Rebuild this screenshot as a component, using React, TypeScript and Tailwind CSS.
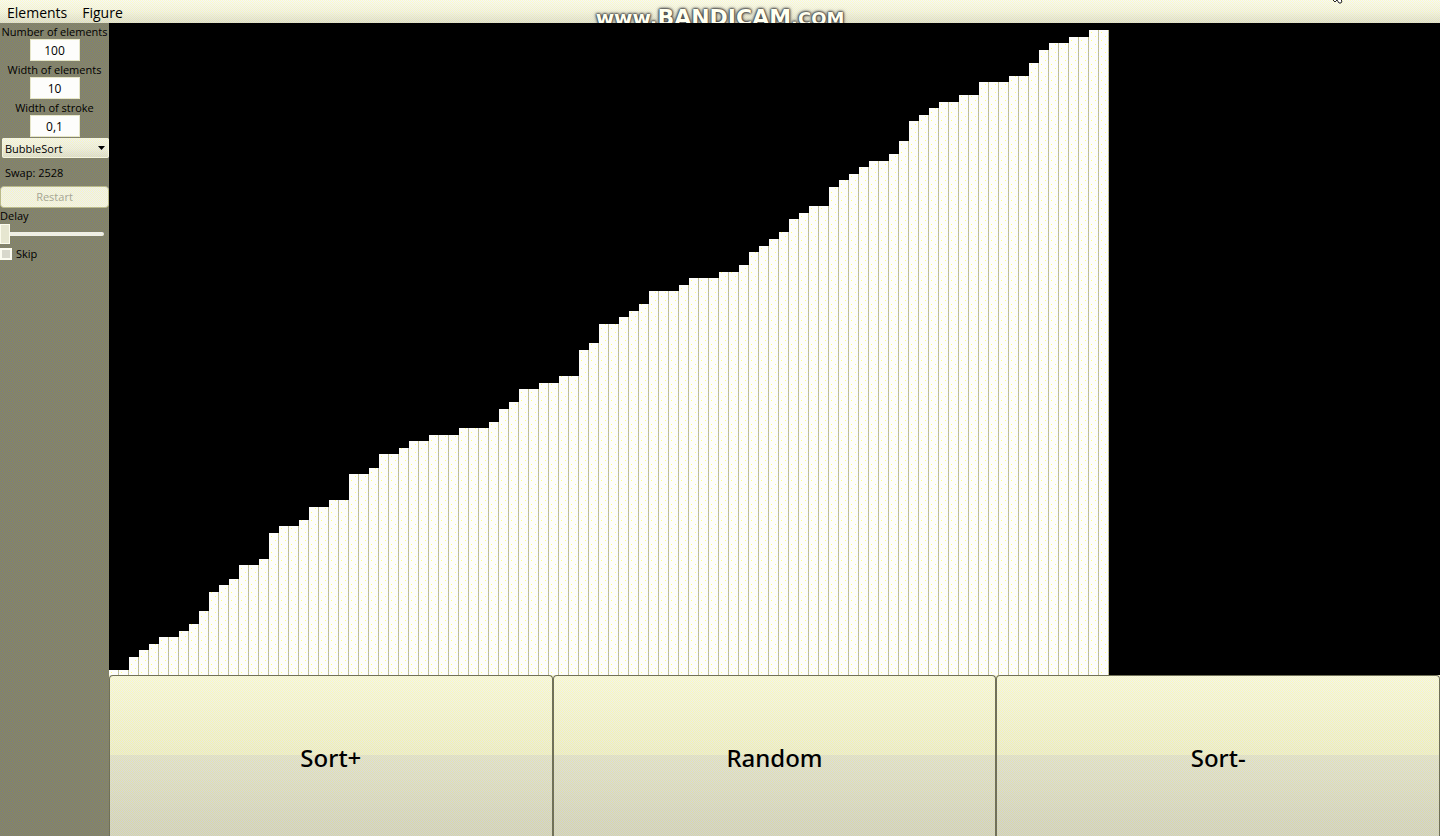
import { useState } from "react";

const values = [
  1, 1, 3, 4, 5, 6, 6, 7, 8, 10, 13, 14, 15, 17, 17, 18, 22, 23, 23, 24,
  26, 26, 27, 27, 31, 31, 32, 34, 34, 35, 36, 36, 37, 37, 37, 38, 38, 38, 39, 41,
  42, 44, 44, 45, 45, 46, 46, 50, 51, 54, 54, 55, 56, 57, 59, 59, 59, 60, 61, 61,
  61, 62, 62, 63, 65, 66, 67, 68, 70, 71, 72, 72, 75, 76, 77, 78, 79, 79, 80, 82,
  85, 86, 87, 88, 88, 89, 89, 91, 91, 91, 92, 92, 94, 96, 97, 97, 98, 98, 99, 99,
];

const BASE = 653.5;
const UNIT = 6.53;

function Patterns() {
  return (
    <svg className="absolute size-0" aria-hidden="true">
      <defs>
        <pattern id="dither-dark" width="2" height="2" patternUnits="userSpaceOnUse">
          <rect width="2" height="2" fill="#76768c" />
          <rect x="1" width="1" height="1" fill="#90904c" />
          <rect y="1" width="1" height="1" fill="#90904c" />
        </pattern>
        <pattern id="dither-light" width="2" height="2" patternUnits="userSpaceOnUse">
          <rect width="1" height="1" fill="#ffff60" fillOpacity="0.36" />
          <rect x="1" y="1" width="1" height="1" fill="#ffff60" fillOpacity="0.36" />
          <rect x="1" width="1" height="1" fill="#d8d8ff" fillOpacity="0.35" />
          <rect y="1" width="1" height="1" fill="#d8d8ff" fillOpacity="0.35" />
        </pattern>
      </defs>
    </svg>
  );
}

function Dither({ dark = false }: { dark?: boolean }) {
  return (
    <svg className="pointer-events-none absolute inset-0 size-full" shapeRendering="crispEdges" aria-hidden="true">
      <rect width="100%" height="100%" fill={dark ? "url(#dither-dark)" : "url(#dither-light)"} />
    </svg>
  );
}

function Field({ id, label, value }: { id: string; label: string; value: string }) {
  const [text, setText] = useState(value);
  return (
    <div className="flex flex-col items-center">
      <label htmlFor={id} className="h-4 leading-[18px] whitespace-nowrap">
        {label}
      </label>
      <input
        id={id}
        value={text}
        onChange={(e) => setText(e.target.value)}
        className="h-[22px] w-[50px] border border-[#e6e6c8] bg-[#fdfdfb] text-center text-xs outline-none"
      />
    </div>
  );
}

function Chart() {
  return (
    <svg
      className="h-full w-[1000px] shrink-0"
      viewBox="0 0 1000 652"
      preserveAspectRatio="none"
      shapeRendering="crispEdges"
      role="img"
      aria-label="Elements"
    >
      <defs>
        <pattern id="speckle" width="10" height="8" patternUnits="userSpaceOnUse">
          <rect width="10" height="8" fill="#fdfdfb" />
          <rect x="2" y="1" width="1" height="1" fill="#ffff80" />
          <rect x="6" y="5" width="1" height="1" fill="#ffff80" />
          <rect x="9" width="1" height="8" fill="#c0c08c" />
          <rect x="9" y="1" width="1" height="1" fill="#b4b4cc" />
          <rect x="9" y="5" width="1" height="1" fill="#b4b4cc" />
        </pattern>
      </defs>
      {values.map((v, i) => (
        <rect key={i} x={i * 10} y={Math.round(BASE - v * UNIT)} width={10} height={v * UNIT} fill="url(#speckle)" />
      ))}
    </svg>
  );
}

export default function App() {
  const [skip, setSkip] = useState(false);
  return (
    <div className="flex h-screen flex-col overflow-hidden bg-black font-['Open_Sans','Noto_Sans',sans-serif] text-xs text-black">
      <Patterns />
      <header className="relative h-[23px] shrink-0 overflow-hidden bg-linear-to-b from-white via-[#f4f4f0] to-[#d8d8d4]">
        <Dither />
        <nav className="relative flex h-full items-center gap-[15px] px-[7px] pt-0.5 text-sm">
          <button type="button">Elements</button>
          <button type="button">Figure</button>
        </nav>
        <div className="absolute inset-x-0 top-1 flex items-baseline justify-center font-['DejaVu_Sans',sans-serif] leading-6 font-bold text-[#fffff0] [text-shadow:0_0_2px_#333,0_0_2px_#333,0_0_3px_#555,0_0_4px_#777]">
          <span className="text-xl">www.</span>
          <span className="text-[22px]">BANDICAM</span>
          <span className="text-lg">.COM</span>
        </div>
        <svg className="absolute top-0 right-[96px] h-1 w-3" viewBox="0 0 12 4">
          <path d="M1 0 L3 2 L5 0 L7 3 L9 3 L10 1 L9 0" fill="#fff" stroke="#222" />
        </svg>
      </header>
      <div className="flex min-h-0 flex-1">
        <aside className="relative w-[109px] shrink-0 bg-[#84846c] text-[11px]">
          <Dither dark />
          <div className="relative">
            <Field id="count" label="Number of elements" value="100" />
            <Field id="width" label="Width of elements" value="10" />
            <Field id="stroke" label="Width of stroke" value="0,1" />
            <div className="relative mt-px ml-0.5 h-5 overflow-hidden rounded-xs bg-linear-to-b from-[#f8f8f8] via-[#ededed] to-[#d2d2d2]">
              <Dither />
              <select
                aria-label="Algorithm"
                className="relative block h-5 w-full appearance-none rounded-xs border border-[#f4f4dc] px-0.5 pt-0.5 outline-none"
              >
                <option>BubbleSort</option>
              </select>
              <svg className="pointer-events-none absolute top-2 right-1 h-1 w-[7px]" viewBox="0 0 7 4">
                <path d="M0 0H7L3.5 4Z" />
              </svg>
            </div>
            <p className="mt-1.5 mb-1 h-[18px] px-[5px] leading-[18px]">Swap: 2528</p>
            <button
              type="button"
              disabled
              className="relative block h-[22px] w-full overflow-hidden rounded-sm border border-[#b9b98c] bg-[#f4f4f4] text-[#a6a694]"
            >
              <Dither />
              <span className="relative">Restart</span>
            </button>
            <label htmlFor="delay" className="block h-[15px] leading-4">
              Delay
            </label>
            <input
              id="delay"
              type="range"
              defaultValue={0}
              className="block h-[22px] w-[104px] appearance-none bg-transparent [&::-webkit-slider-runnable-track]:h-1 [&::-webkit-slider-runnable-track]:rounded-xs [&::-webkit-slider-runnable-track]:bg-[#efefe4] [&::-webkit-slider-thumb]:-mt-2 [&::-webkit-slider-thumb]:h-5 [&::-webkit-slider-thumb]:w-[10px] [&::-webkit-slider-thumb]:appearance-none [&::-webkit-slider-thumb]:border [&::-webkit-slider-thumb]:border-[#fbfbec] [&::-webkit-slider-thumb]:bg-[#e6e6d0]"
            />
            <label className="flex h-[18px] items-center gap-1">
              <input
                type="checkbox"
                checked={skip}
                onChange={(e) => setSkip(e.target.checked)}
                className="size-3 appearance-none border-2 border-[#fbfbf0] bg-[#d8d8cc] checked:bg-[#606040]"
              />
              Skip
            </label>
          </div>
        </aside>
        <main className="flex min-w-0 flex-1 flex-col">
          <div className="flex min-h-0 flex-1 overflow-hidden bg-black">
            <Chart />
          </div>
          <div className="relative grid h-[161px] shrink-0 grid-cols-3 bg-[linear-gradient(#fbfbee,#ececd0_50%,#dadad4_50%,#c6c6c2)]">
            <Dither />
            {["Sort+", "Random", "Sort-"].map((name) => (
              <button
                key={name}
                type="button"
                className="relative rounded-t-sm border border-b-0 border-[#707058] pt-1 font-['Noto_Sans',sans-serif] text-2xl font-medium"
              >
                {name}
              </button>
            ))}
          </div>
        </main>
      </div>
    </div>
  );
}
